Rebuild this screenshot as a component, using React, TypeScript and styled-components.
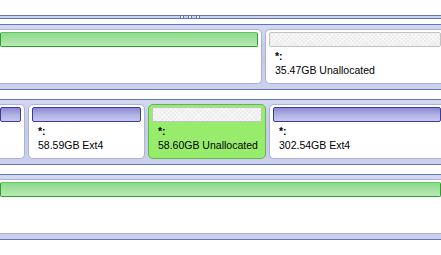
import styled, { createGlobalStyle, css } from 'styled-components';

const GlobalStyle = createGlobalStyle`
  html, body {
    margin: 0;
    padding: 0;
    background: #ffffff;
  }
  body {
    font-family: "Liberation Sans", Arial, sans-serif;
  }
`;

type Clip = 'left' | 'right' | 'both' | 'none';
type Kind = 'ext4' | 'unalloc' | 'used';

const Screen = styled.div`
  width: 441px;
  height: 255px;
  overflow: hidden;
  background: #ffffff;
  display: flex;
  flex-direction: column;
  padding-top: 15px;
  box-sizing: border-box;
`;

const Handle = styled.div`
  height: 4px;
  flex: 0 0 4px;
  box-sizing: border-box;
  border-top: 1px solid #6176c2;
  border-bottom: 1px solid #6176c2;
  background: #cfd4ee;
  display: flex;
  gap: 4px;
  padding-left: 180px;
  margin-bottom: 5px;
`;

const Grip = styled.span`
  width: 4px;
  height: 4px;
  margin-top: -1px;
  box-sizing: border-box;
  border: 1px solid #6176c2;
  background: #eef0fa;
`;

const Pane = styled.div`
  height: 66px;
  flex: 0 0 66px;
  box-sizing: border-box;
  border-top: 1px solid #6176c2;
  border-bottom: 1px solid #6176c2;
  background: linear-gradient(#d3d7ef, #c5cae6 50%, #cdd1ec);
  padding: 4px 0 5px;
  display: flex;
  gap: 3px;
  overflow: hidden;

  & + & {
    margin-top: 9px;
  }
`;

const clipCss = (clip: Clip) => {
  const left = clip === 'left' || clip === 'both';
  const right = clip === 'right' || clip === 'both';
  return css`
    ${left && 'border-left: none; border-top-left-radius: 0; border-bottom-left-radius: 0; padding-left: 0;'}
    ${right && 'border-right: none; border-top-right-radius: 0; border-bottom-right-radius: 0; padding-right: 0;'}
  `;
};

const Box = styled.div<{ $w?: number; $clip: Clip; $selected?: boolean }>`
  ${({ $w }) => ($w ? `flex: 0 0 ${$w}px;` : 'flex: 1 1 auto;')}
  box-sizing: border-box;
  height: 100%;
  border: 1px solid ${({ $selected }) => ($selected ? '#5fb84e' : '#aab2d8')};
  border-radius: 5px;
  background: ${({ $selected }) => ($selected ? '#98ec6c' : '#ffffff')};
  padding: 2px 3px 0;
  overflow: hidden;
  display: flex;
  flex-direction: column;
  ${({ $clip }) => clipCss($clip)}
`;

const barStyles: Record<Kind, ReturnType<typeof css>> = {
  ext4: css`
    border: 1px solid #3d3d94;
    background: linear-gradient(#8a8ad2, #b2b2e6 55%, #c6c6ee);
  `,
  used: css`
    border: 1px solid #2e9e2e;
    border-top-color: #58c858;
    background: linear-gradient(#8ed98e, #b8eab2);
  `,
  unalloc: css`
    border: 1px solid #c2c2c2;
    background-color: #ececec;
    background-image: repeating-linear-gradient(
        45deg,
        #f6f6f6 0 1px,
        transparent 1px 3px
      ),
      repeating-linear-gradient(-45deg, #f6f6f6 0 1px, transparent 1px 3px);
  `,
};

const Bar = styled.div<{ $kind: Kind }>`
  height: 15px;
  flex: 0 0 15px;
  box-sizing: border-box;
  border-radius: 2px;
  ${({ $kind }) => barStyles[$kind]}
`;

const Info = styled.div`
  padding: 2px 0 0 6px;
  font-size: 10.5px;
  line-height: 14px;
  color: #000000;
  white-space: nowrap;
`;

const Path = styled.div`
  font-weight: bold;
`;

type Part = {
  w?: number;
  clip: Clip;
  kind: Kind;
  selected?: boolean;
  label?: string;
};

const rows: Part[][] = [
  [
    { w: 262, clip: 'left', kind: 'used' },
    { clip: 'right', kind: 'unalloc', label: '35.47GB Unallocated' },
  ],
  [
    { w: 25, clip: 'left', kind: 'ext4' },
    { w: 117, clip: 'none', kind: 'ext4', label: '58.59GB Ext4' },
    { w: 118, clip: 'none', kind: 'unalloc', selected: true, label: '58.60GB Unallocated' },
    { clip: 'right', kind: 'ext4', label: '302.54GB Ext4' },
  ],
  [{ clip: 'both', kind: 'used' }],
];

function Partition({ part }: { part: Part }) {
  return (
    <Box $w={part.w} $clip={part.clip} $selected={part.selected}>
      <Bar $kind={part.kind} />
      {part.label && (
        <Info>
          <Path>*:</Path>
          <div>{part.label}</div>
        </Info>
      )}
    </Box>
  );
}

export default function App() {
  return (
    <>
      <GlobalStyle />
      <Screen>
        <Handle>
          <Grip />
          <Grip />
          <Grip />
        </Handle>
        {rows.map((row, i) => (
          <Pane key={i}>
            {row.map((part, j) => (
              <Partition key={j} part={part} />
            ))}
          </Pane>
        ))}
      </Screen>
    </>
  );
}
